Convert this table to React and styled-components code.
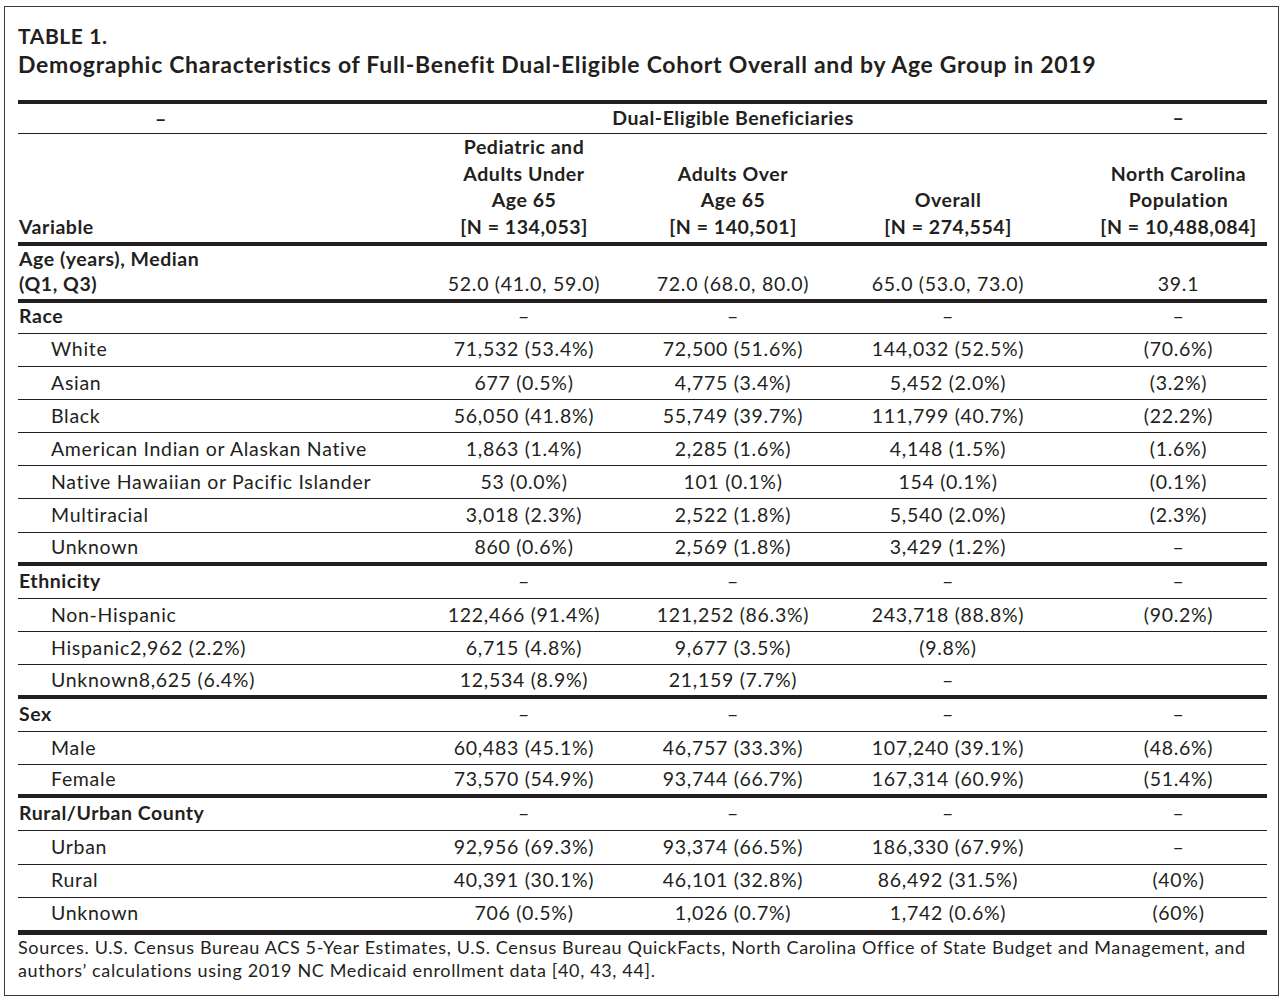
import React from "react";
import styled, { createGlobalStyle } from "styled-components";

const GlobalStyle = createGlobalStyle`
  body {
    margin: 0;
    background: #ffffff;
    font-family: Lato, "Noto Sans", "Liberation Sans", sans-serif;
    color: #231f20;
  }
`;

const Frame = styled.div`
  box-sizing: border-box;
  width: 1275px;
  height: 990px;
  margin: 6px 0 0 4px;
  border: 1.5px solid #3a3a3a;
  padding: 15px 11px 0 13px;
`;

const Caption = styled.div`
  font-weight: 700;
  font-size: ${(p) => p.size}px;
  line-height: 28px;
  letter-spacing: ${(p) => p.spacing || 0}px;
`;

const TitleBlock = styled.div`
  margin-bottom: 22px;
`;

const Table = styled.div`
  border-top: 4px solid #231f20;
  font-size: 19.5px;
  letter-spacing: 0.7px;
`;

const Row = styled.div`
  box-sizing: border-box;
  display: grid;
  grid-template-columns: 407px 198px 220px 210px 1fr;
  align-items: center;
  height: ${(p) => p.h || 33.2}px;
  padding-bottom: ${(p) => p.lift || 0}px;
  border-bottom: ${(p) => p.rule || 1}px solid #231f20;
  font-weight: ${(p) => (p.bold ? 700 : 400)};
  letter-spacing: ${(p) => (p.bold ? 0.55 : 0.7)}px;
`;

const HeadRow = styled(Row)`
  align-items: end;
`;

const AgeRow = styled(Row)`
  align-items: start;
`;

const Cell = styled.div`
  text-align: center;
  white-space: nowrap;
  line-height: ${(p) => p.lh || 26.5}px;
  &:last-child {
    padding-left: 37px;
  }
`;

const LabelCell = styled.div`
  text-align: left;
  white-space: nowrap;
  line-height: ${(p) => p.lh || 26.5}px;
  padding-left: ${(p) => (p.indent ? 33 : 1)}px;
  font-weight: ${(p) => (p.strong ? 700 : "inherit")};
  letter-spacing: ${(p) => (p.strong ? "0.55px" : "inherit")};
`;

const DashCell = styled.div`
  padding-left: 137px;
`;

const SpanCell = styled(Cell)`
  grid-column: 2 / span 3;
  padding-right: 12px;
`;

const Sources = styled.div`
  font-size: 18px;
  letter-spacing: 0.66px;
  line-height: 23px;
  padding-top: 1px;
`;

const D = "–";

const groups = [
  {
    title: "Race",
    rows: [
      ["White", "71,532 (53.4%)", "72,500 (51.6%)", "144,032 (52.5%)", "(70.6%)"],
      ["Asian", "677 (0.5%)", "4,775 (3.4%)", "5,452 (2.0%)", "(3.2%)"],
      ["Black", "56,050 (41.8%)", "55,749 (39.7%)", "111,799 (40.7%)", "(22.2%)"],
      ["American Indian or Alaskan Native", "1,863 (1.4%)", "2,285 (1.6%)", "4,148 (1.5%)", "(1.6%)"],
      ["Native Hawaiian or Pacific Islander", "53 (0.0%)", "101 (0.1%)", "154 (0.1%)", "(0.1%)"],
      ["Multiracial", "3,018 (2.3%)", "2,522 (1.8%)", "5,540 (2.0%)", "(2.3%)"],
      ["Unknown", "860 (0.6%)", "2,569 (1.8%)", "3,429 (1.2%)", D],
    ],
  },
  {
    title: "Ethnicity",
    rows: [
      ["Non-Hispanic", "122,466 (91.4%)", "121,252 (86.3%)", "243,718 (88.8%)", "(90.2%)"],
      ["Hispanic2,962 (2.2%)", "6,715 (4.8%)", "9,677 (3.5%)", "(9.8%)", ""],
      ["Unknown8,625 (6.4%)", "12,534 (8.9%)", "21,159 (7.7%)", D, ""],
    ],
  },
  {
    title: "Sex",
    rows: [
      ["Male", "60,483 (45.1%)", "46,757 (33.3%)", "107,240 (39.1%)", "(48.6%)"],
      ["Female", "73,570 (54.9%)", "93,744 (66.7%)", "167,314 (60.9%)", "(51.4%)"],
    ],
  },
  {
    title: "Rural/Urban County",
    rows: [
      ["Urban", "92,956 (69.3%)", "93,374 (66.5%)", "186,330 (67.9%)", D],
      ["Rural", "40,391 (30.1%)", "46,101 (32.8%)", "86,492 (31.5%)", "(40%)"],
      ["Unknown", "706 (0.5%)", "1,026 (0.7%)", "1,742 (0.6%)", "(60%)"],
    ],
  },
];

export default function App() {
  return (
    <>
      <GlobalStyle />
      <Frame>
        <TitleBlock>
          <Caption size={21} spacing={0.6}>TABLE 1.</Caption>
          <Caption size={23} spacing={0.7}>
            Demographic Characteristics of Full-Benefit Dual-Eligible Cohort Overall and by Age Group in 2019
          </Caption>
        </TitleBlock>

        <Table>
          <Row bold h={30}>
            <DashCell>{D}</DashCell>
            <SpanCell>Dual-Eligible Beneficiaries</SpanCell>
            <Cell>{D}</Cell>
          </Row>
          <HeadRow bold h={112} rule={4} lift={3}>
            <LabelCell>Variable</LabelCell>
            <Cell>
              Pediatric and
              <br />
              Adults Under
              <br />
              Age 65
              <br />
              [N = 134,053]
            </Cell>
            <Cell>
              Adults Over
              <br />
              Age 65
              <br />
              [N = 140,501]
            </Cell>
            <Cell>
              Overall
              <br />
              [N = 274,554]
            </Cell>
            <Cell>
              North Carolina
              <br />
              Population
              <br />
              [N = 10,488,084]
            </Cell>
          </HeadRow>
          <AgeRow h={57} rule={4}>
            <LabelCell strong lh={25}>
              Age (years), Median
              <br />
              (Q1, Q3)
            </LabelCell>
            <Cell lh={25}>
              <br />
              52.0 (41.0, 59.0)
            </Cell>
            <Cell lh={25}>
              <br />
              72.0 (68.0, 80.0)
            </Cell>
            <Cell lh={25}>
              <br />
              65.0 (53.0, 73.0)
            </Cell>
            <Cell lh={25}>
              <br />
              39.1
            </Cell>
          </AgeRow>

          {groups.map((g, gi) => (
            <React.Fragment key={g.title}>
              <Row h={gi === 0 ? 30.5 : 33.2} lift={gi === 0 ? 3 : 1}>
                <LabelCell strong>{g.title}</LabelCell>
                <Cell>{D}</Cell>
                <Cell>{D}</Cell>
                <Cell>{D}</Cell>
                <Cell>{D}</Cell>
              </Row>
              {g.rows.map((r, ri) => {
                const last = ri === g.rows.length - 1;
                const finalRow = last && gi === groups.length - 1;
                return (
                  <Row key={r[0] + ri} rule={finalRow ? 5 : last ? 4 : 1} h={finalRow ? 37 : 33.2}>
                    <LabelCell indent>{r[0]}</LabelCell>
                    {r.slice(1).map((v, vi) => (
                      <Cell key={vi}>{v}</Cell>
                    ))}
                  </Row>
                );
              })}
            </React.Fragment>
          ))}
        </Table>

        <Sources>
          Sources. U.S. Census Bureau ACS 5-Year Estimates, U.S. Census Bureau QuickFacts, North Carolina Office of
          State Budget and Management, and
          <br />
          authors’ calculations using 2019 NC Medicaid enrollment data [40, 43, 44].
        </Sources>
      </Frame>
    </>
  );
}
